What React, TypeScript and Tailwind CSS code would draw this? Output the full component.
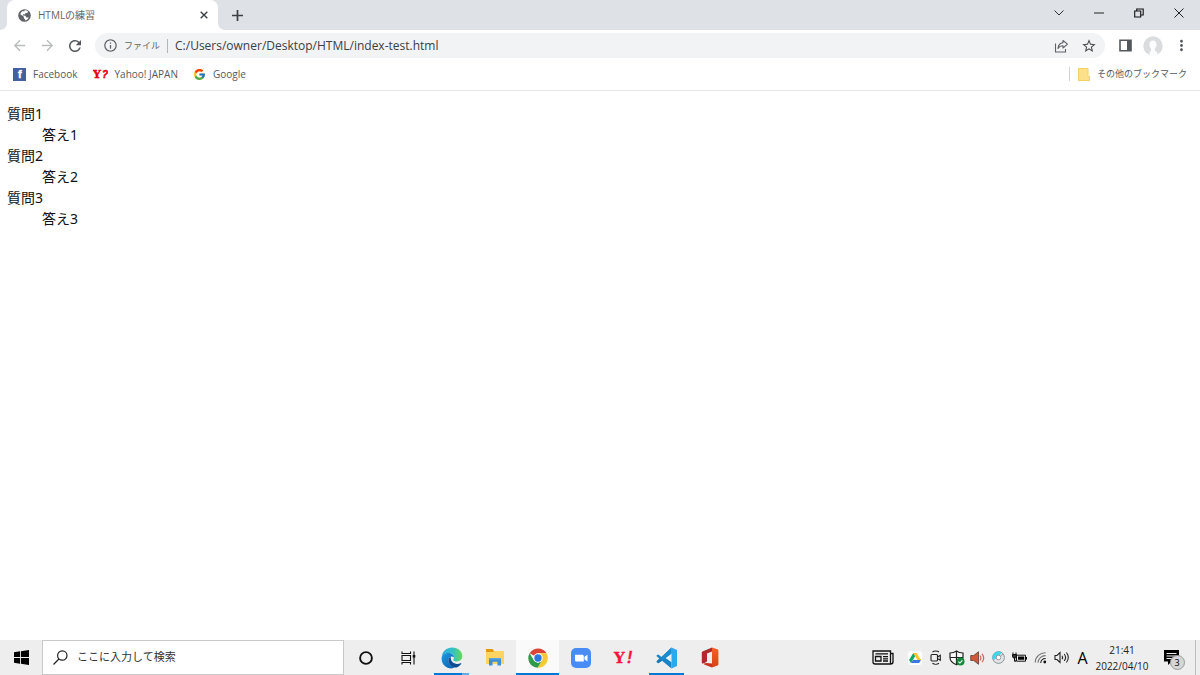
import React from 'react';
import { FcGoogle } from 'react-icons/fc';
import { MdArrowBack, MdArrowForward, MdRefresh, MdInfoOutline, MdStarBorder, MdMoreVert } from 'react-icons/md';

const uiFont = "font-['Open_Sans','Noto_Sans_CJK_JP',sans-serif]";

const questions = [
  { q: '質問1', a: '答え1' },
  { q: '質問2', a: '答え2' },
  { q: '質問3', a: '答え3' },
];

/* ---------- Browser icons ---------- */

const GlobeIcon = () => (
  <svg width="13" height="13" viewBox="0 0 13 13">
    <circle cx="6.5" cy="6.5" r="6.300" fill="#5f6368" />
    <path d="M6.600 1.200c1.500 0 2.600.5 3.500 1.400L9.300 4 7.500 4.200 6.600 5.400 5 5.300 4.800 6.600l2.600.2 1 1.600 2.300.1c-.5 1.400-1.700 2.600-3.200 3L7 10.200 5.800 9.300l.1-1.500-3.600-2.600c.5-1.600 1.400-2.600 2.500-3.200l1.400.6z" fill="#fff" />
  </svg>
);

const ShareIcon = () => (
  <svg width="15" height="14" viewBox="0 0 15 14" fill="none" stroke="#5f6368" strokeWidth="1.1">
    <path d="M1.500 4.500V13h10v-3" />
    <path d="M9 1.500l4.500 3.700L9 9V6.800C6.500 6.800 5 7.800 4 9.500c.3-3.300 2-5.500 5-5.900z" strokeLinejoin="round" />
  </svg>
);

const AvatarIcon = () => (
  <svg width="20" height="20" viewBox="0 0 20 20">
    <circle cx="10" cy="10" r="9.700" fill="#dadcde" />
    <path d="M10 4.500c2.300 0 3.600 1.700 3.600 4 0 1.700-.7 3.200-1.600 4.200v2l2.300 1.600V20H6.500v-3.700L8 14.700v-2c-1-1-1.600-2.500-1.600-4.200 0-2.300 1.300-4 3.600-4z" fill="#fbfcfd" />
  </svg>
);

const FacebookIcon = () => (
  <svg width="13" height="13" viewBox="0 0 13 13">
    <rect width="13" height="13" fill="#4460a0" />
    <text x="5" y="10" fontFamily="Liberation Sans" fontWeight="700" fontSize="11" fill="#fff" stroke="#fff" strokeWidth=".4">f</text>
  </svg>
);

const YahooJapanIcon = () => (
  <svg width="15" height="15" viewBox="0 0 15 15" fill="#e60012" stroke="#e60012" strokeWidth=".5">
    <text x="0" y="11" fontFamily="DejaVu Serif" fontWeight="700" fontSize="11">Y</text>
    <text x="9" y="11" fontFamily="Liberation Sans" fontWeight="700" fontStyle="italic" fontSize="10">?</text>
  </svg>
);

/* ---------- Taskbar icons ---------- */

const WindowsIcon = () => (
  <svg width="15" height="15" viewBox="0 0 15 15" fill="#000">
    <path d="M0 2.200l6-.9v5.800H0zM6.900 1.200L15 0v7.100H6.900zM0 7.900h6v5.800l-6-.9zM6.900 7.900H15V15l-8.100-1.200z" />
  </svg>
);

const SearchIcon = () => (
  <svg width="15" height="15" viewBox="0 0 15 15" fill="none" stroke="#222" strokeWidth="1.200">
    <circle cx="9.300" cy="5.500" r="4.700" />
    <path d="M5.900 9L.5 14.500" />
  </svg>
);

const CortanaIcon = () => (
  <svg width="14" height="14" viewBox="0 0 14 14">
    <circle cx="7" cy="7" r="5.900" fill="none" stroke="#111" strokeWidth="1.900" />
  </svg>
);

const TaskViewIcon = () => (
  <svg width="15" height="14" viewBox="0 0 15 14" fill="none" stroke="#111" strokeWidth="1.100">
    <path d="M1 .5v2h8.500v-2M1 13.500v-2h8.500v2M1 4.500h8.500v5H1zM13 .5v13" />
    <path d="M11.700 4h2.600v2.600h-2.600z" fill="#111" stroke="none" />
  </svg>
);

const EdgeIcon = () => (
  <svg width="22" height="22" viewBox="0 0 22 22">
    <defs>
      <linearGradient id="edgeTop" x1="0" y1="0" x2="1" y2="0">
        <stop offset="0" stopColor="#2aa9dc" />
        <stop offset=".55" stopColor="#34c3c4" />
        <stop offset="1" stopColor="#66d84f" />
      </linearGradient>
      <linearGradient id="edgeSide" x1="0" y1="0" x2="1" y2="1">
        <stop offset="0" stopColor="#1b9be4" />
        <stop offset="1" stopColor="#0a5cb0" />
      </linearGradient>
    </defs>
    <path d="M.7 10C1.200 4.300 5.800.5 11.200.5c5.900 0 10.100 4.100 10.100 8.600 0 3.400-2.500 5.400-5.400 5.400-2.400 0-3.800-.9-3.800-1.600 0-.5.900-.9.900-2.500 0-2.300-2-4.300-5.300-4.300C4.300 6.100 1.600 7.900.7 10z" fill="url(#edgeTop)" />
    <path d="M.6 11.400c.1-3.200 3-5.400 6.700-5.400 3.400 0 5.700 2.100 5.700 4.500-1-.9-2.300-1.100-3.200-.7-2 .8-2.800 3-2.200 5.300.7 2.700 3 4.800 6 5.500-1 .5-2.100.8-3 .8C4.900 21.400.5 17 .6 11.400z" fill="url(#edgeSide)" />
    <path d="M9.800 9.800c-2.200.9-2.900 3.400-2.100 5.800 1.200 3.600 4.500 5.300 7.600 4.900 2-.6 3.900-2.100 4.900-3.800.3-.5-.1-.8-.6-.5-1.200.6-2.500.8-3.900.7-3.800-.3-6.300-3.100-5.900-7.100z" fill="#0d4b96" />
  </svg>
);

const ExplorerIcon = () => (
  <svg width="20" height="17" viewBox="0 0 20 17">
    <path d="M1 0h6.500L9 2v3H1z" fill="#e19a0c" />
    <path d="M1 3h7l1.500-1H19v13H1z" fill="#fcd462" />
    <path d="M4 9h12v7.500h-3.500v-3.700h-5v3.700H4z" fill="#3c8fd6" />
    <path d="M4 9h12v1.500H4z" fill="#56a6e4" />
  </svg>
);

const ChromeIcon = () => (
  <svg width="20" height="20" viewBox="0 0 48 48">
    <path d="M24 24L4 12.500A23.500 23.500 0 0 1 44.500 12.700H24z" fill="#db4437" />
    <path d="M24 12.700h20.500A23.500 23.500 0 0 1 23 47.500l10.800-18z" fill="#fcc934" />
    <path d="M3.800 12.300L14.200 29.700 24 35.300l9.800-5.800L23 47.500A23.500 23.500 0 0 1 3.800 12.300z" fill="#2e9c4b" />
    <circle cx="24" cy="24" r="11.300" fill="#fff" />
    <circle cx="24" cy="24" r="8.800" fill="#2a76e2" />
  </svg>
);

const ZoomIcon = () => (
  <svg width="20" height="20" viewBox="0 0 20 20">
    <rect width="20" height="20" rx="5" fill="#4a8cf6" />
    <path d="M4 6.700h7.200c1 0 1.600.7 1.600 1.600v5.200H5.600C4.600 13.500 4 12.800 4 11.900zM13.500 8.800l3-2v6.600l-3-2z" fill="#fff" />
  </svg>
);

const YahooIcon = () => (
  <svg width="22" height="22" viewBox="0 0 22 22" fill="#f5153f" stroke="#f5153f" strokeWidth=".3">
    <text x="1" y="16" fontFamily="DejaVu Serif" fontWeight="700" fontSize="15">Y</text>
    <text x="14" y="16" fontFamily="Liberation Sans" fontWeight="700" fontStyle="italic" fontSize="16">!</text>
  </svg>
);

const VSCodeIcon = () => (
  <svg width="22" height="22" viewBox="0 0 22 22">
    <path d="M15.500.5L5.500 10 2.300 7.500.6 8.300v1L15.500 21.500v-6.200L9.500 11l6-4.400z" fill="#1784c8" />
    <path d="M15.500 6.600L9.500 11 2.300 16.300.6 15.300v-1.100L5.500 10l10-9.500z" fill="#1b8bd0" />
    <path d="M.6 14.200L4 11l2 2.700-3.700 2.600z" fill="#1b78bb" />
    <path d="M15.500.5L21 3v16l-5.500 2.500z" fill="#2ba9ee" />
  </svg>
);

const OfficeIcon = () => (
  <svg width="18" height="21" viewBox="0 0 18 21">
    <defs>
      <linearGradient id="officeSide" x1="0" y1="0" x2="0" y2="1">
        <stop offset="0" stopColor="#f0642c" />
        <stop offset=".5" stopColor="#e8501c" />
        <stop offset="1" stopColor="#d8401a" />
      </linearGradient>
    </defs>
    <path d="M.8 5.800C.8 5 1.200 4.600 2 4.200L11 .5v4L6 6.400v7.200c0 1-.5 1.500-1.400 1.900L2 16.600c-.8.200-1.200-.2-1.200-1z" fill="#b3282a" />
    <path d="M11 .5l5.500 1.800c.6.200.9.600.9 1.200v13.800c0 .7-.3 1-.9 1.200L11 20.500z" fill="url(#officeSide)" />
    <path d="M3 16.500l2.500-.5 5.500.5v4L3.800 17.800c-.8-.3-1-.8-.8-1.300z" fill="#c93220" />
  </svg>
);

const NewsIcon = () => (
  <svg width="22" height="15" viewBox="0 0 22 15" fill="none" stroke="#111" strokeWidth="1.300">
    <path d="M1 1h17.500v13H3.200C1.800 14 1 13.200 1 12zM18.500 3.500H21V12c0 1.300-.9 2-2.500 2" />
    <path d="M3.500 6.500H9V11H3.500zM3.500 3.800h12.500M11 6.600h5M11 8.800h5M11 11h5" />
  </svg>
);

const DriveIcon = () => (
  <svg width="14" height="14" viewBox="0 0 14 14">
    <rect width="14" height="14" rx="3" fill="#fff" />
    <path d="M5.300 2L1 9l2 3L7.300 5z" fill="#11a860" />
    <path d="M5.300 2h3.400L13 9H9.300z" fill="#fcc52f" />
    <path d="M5 9h8l-2 3H3z" fill="#3678e6" />
  </svg>
);

const MeetIcon = () => (
  <svg width="12" height="15" viewBox="0 0 12 15" fill="none" stroke="#222" strokeWidth="1.100">
    <rect x="1" y="4.500" width="6.500" height="6.500" rx="1" />
    <path d="M7.500 7l2.800-1.700v5L7.500 8.600M2.500 2C4.200.7 7.300.7 9 2M2.500 13.300c1.700 1.200 4.800 1.200 6.500 0" />
  </svg>
);

const ShieldIcon = () => (
  <svg width="16" height="16" viewBox="0 0 16 16">
    <path d="M7.500 1C5.700 2.400 3.500 3 1 3v4.500c0 3.500 2.800 5.800 6.500 7.300C11.200 13.300 14 11 14 7.500V3c-2.500 0-4.700-.6-6.500-2zM7.500 1v13.500M1 7.500h13" fill="#f8f8f8" stroke="#222" strokeWidth="1.200" />
    <circle cx="11.500" cy="11.500" r="4" fill="#16883e" />
    <path d="M9.500 11.600l1.400 1.400 2.500-2.700" fill="none" stroke="#fff" strokeWidth="1.100" />
  </svg>
);

const SpeakerIcon = () => (
  <svg width="15" height="14" viewBox="0 0 15 14">
    <path d="M.7 4.500h3L8.500.7v12.600L3.700 9.500h-3z" fill="#d2583a" stroke="#5e3b34" strokeWidth=".8" />
    <path d="M10 4.500c1 1.500 1 3.500 0 5M12 2.800c2 2.500 2 5.900 0 8.400" fill="none" stroke="#c8685a" strokeWidth="1.200" />
  </svg>
);

const RingIcon = () => (
  <svg width="13" height="13" viewBox="0 0 13 13">
    <circle cx="6.500" cy="6.500" r="5.900" fill="#e2e5e7" stroke="#8c9498" strokeWidth="1" />
    <path d="M6.500 6.500L1.200 9A5.800 5.800 0 0 1 9.500 1.500z" fill="#3cd9ec" />
    <circle cx="6.500" cy="6.500" r="2.300" fill="#fff" stroke="#8c9498" strokeWidth=".9" />
    <path d="M8.500 5l2.500-2" stroke="#8c9498" strokeWidth=".9" />
  </svg>
);

const BatteryIcon = () => (
  <svg width="15" height="11" viewBox="0 0 15 11">
    <path d="M4.500 3.200h9v6h-9z" fill="#eee" stroke="#111" />
    <path d="M6 4.600h6.200v3.200H6zM14 5h1v2.500h-1z" fill="#000" />
    <path d="M1 .5v2M4 .5v2M.5 2.500h4v2c0 1-.8 1.500-2 1.500s-2-.5-2-1.500zM2.500 6v3.200H4" fill="#333" stroke="#111" />
  </svg>
);

const WifiIcon = () => (
  <svg width="13" height="13" viewBox="0 0 13 13" fill="none" strokeWidth="1.100">
    <path d="M1.200 11.500A10 10 0 0 1 11.700 1.800M4 11.800a7.300 7.300 0 0 1 7.700-7.200" stroke="#777" />
    <path d="M6.700 12a4.700 4.700 0 0 1 5-4.500" stroke="#222" />
    <circle cx="10.800" cy="11" r="1.400" fill="#111" />
  </svg>
);

const VolumeIcon = () => (
  <svg width="16" height="13" viewBox="0 0 16 13" fill="none" stroke="#222" strokeWidth="1.100">
    <path d="M1 4.500h2L6 1.500v10l-3-3H1zM8 4.800c.7 1 .7 2.400 0 3.400M10.200 3c1.600 2 1.600 5 0 7M12.400 1.500c2.500 2.900 2.500 7.100 0 10" />
  </svg>
);

const NotificationIcon = () => (
  <svg width="15" height="15" viewBox="0 0 15 15">
    <path d="M0 0h15v11.500H7.500L4 15v-3.500H0z" fill="#000" />
    <path d="M2.500 3.500h10M2.500 6h10M2.500 8.500h6" stroke="#eee" />
  </svg>
);

/* ---------- Data ---------- */

const bookmarks = [
  { label: 'Facebook', icon: <FacebookIcon /> },
  { label: 'Yahoo! JAPAN', icon: <YahooJapanIcon /> },
  { label: 'Google', icon: <FcGoogle size={13} /> },
];

const apps = [
  { name: 'Cortana', icon: <CortanaIcon />, state: 'idle' },
  { name: 'タスク ビュー', icon: <TaskViewIcon />, state: 'idle' },
  { name: 'Edge', icon: <EdgeIcon />, state: 'stacked' },
  { name: 'エクスプローラー', icon: <ExplorerIcon />, state: 'idle' },
  { name: 'Chrome', icon: <ChromeIcon />, state: 'active' },
  { name: 'Zoom', icon: <ZoomIcon />, state: 'idle' },
  { name: 'Yahoo!', icon: <YahooIcon />, state: 'idle' },
  { name: 'Visual Studio Code', icon: <VSCodeIcon />, state: 'open' },
  { name: 'Office', icon: <OfficeIcon />, state: 'idle' },
];

const tray = [
  { name: 'Google ドライブ', icon: <DriveIcon /> },
  { name: '会議', icon: <MeetIcon /> },
  { name: 'セキュリティ', icon: <ShieldIcon /> },
  { name: 'オーディオ', icon: <SpeakerIcon /> },
  { name: 'ディスク', icon: <RingIcon /> },
  { name: 'バッテリー', icon: <BatteryIcon /> },
  { name: 'ネットワーク', icon: <WifiIcon /> },
  { name: '音量', icon: <VolumeIcon /> },
];

/* ---------- Sections ---------- */

const TabStrip = () => (
  <div className="flex h-[30px] bg-[#dee1e6]">
    <div className="flex w-[7px] items-end">
      <svg width="7" height="7" viewBox="0 0 7 7"><path d="M7 0v7H0c4 0 7-3 7-7z" fill="#fff" /></svg>
    </div>
    <div className="flex w-[211px] items-center rounded-t-lg bg-white pr-2 pl-[11px]">
      <GlobeIcon />
      <span className="ml-[7px] flex-1 text-[10px] text-[#5f6368]">HTMLの練習</span>
      <button aria-label="タブを閉じる" className="flex size-3 items-center justify-center">
        <svg width="8" height="8" viewBox="0 0 8 8" stroke="#3c4043" strokeWidth="1.400"><path d="M.7.7l6.600 6.600M7.300.7L.7 7.300" /></svg>
      </button>
    </div>
    <div className="flex w-[7px] items-end">
      <svg width="7" height="7" viewBox="0 0 7 7"><path d="M0 0v7h7C3 7 0 4 0 0z" fill="#fff" /></svg>
    </div>
    <button aria-label="新しいタブ" className="flex w-6 items-center justify-center">
      <svg width="11" height="11" viewBox="0 0 11 11" stroke="#3c4043" strokeWidth="1.700"><path d="M5.500 0v11M0 5.500h11" /></svg>
    </button>
    <div className="ml-auto flex h-[25px] pr-px">
      <button aria-label="タブを検索" className="flex w-10 items-center justify-center">
        <svg width="10" height="6" viewBox="0 0 10 6" fill="none" stroke="#333"><path d="M.5.5L5 5 9.500.5" /></svg>
      </button>
      <button aria-label="最小化" className="flex w-10 items-center justify-center">
        <svg width="10" height="2" viewBox="0 0 10 2"><path d="M0 .5h10v1H0z" fill="#222" /></svg>
      </button>
      <button aria-label="元に戻す" className="flex w-10 items-center justify-center">
        <svg width="10" height="10" viewBox="0 0 10 10" fill="none" stroke="#111" strokeWidth="1.100"><path d="M.7 3h6v6h-6zM2.700 3V1h6.500v6H7" /></svg>
      </button>
      <button aria-label="閉じる" className="flex w-10 items-center justify-center">
        <svg width="10" height="10" viewBox="0 0 10 10" stroke="#222"><path d="M.5.5l9 9M9.500.5l-9 9" /></svg>
      </button>
    </div>
  </div>
);

const Toolbar = () => (
  <div className="flex h-[31px] items-center bg-white px-[5px]">
    <button aria-label="戻る" className="flex w-7 justify-center"><MdArrowBack size={17} color="#babcbe" /></button>
    <button aria-label="進む" className="flex w-7 justify-center"><MdArrowForward size={17} color="#babcbe" /></button>
    <button aria-label="再読み込み" className="flex w-7 justify-center"><MdRefresh size={18} color="#54585c" /></button>
    <div className="ml-[6px] flex h-[25px] flex-1 items-center rounded-full bg-[#f1f3f4] pr-[2px] pl-2">
      <MdInfoOutline size={15} color="#5f6368" />
      <label htmlFor="address" className="ml-[6px] text-[9px] whitespace-nowrap text-[#5f6368]">ファイル</label>
      <span className="mx-[7px] h-[14px] w-px bg-[#b4b7ba]" />
      <input
        id="address"
        type="text"
        defaultValue="C:/Users/owner/Desktop/HTML/index-test.html"
        className="min-w-0 flex-1 bg-transparent text-[12px] text-[#3c4043] outline-none"
      />
      <button aria-label="共有" className="flex w-7 justify-center"><ShareIcon /></button>
      <button aria-label="ブックマークに追加" className="flex w-7 justify-center"><MdStarBorder size={16} color="#4a4e52" /></button>
    </div>
    <button aria-label="サイドパネル" className="ml-[6px] flex w-7 justify-center">
      <svg width="13" height="13" viewBox="0 0 13 13"><path d="M1 1.200h11v10.600H1z" fill="none" stroke="#54585c" strokeWidth="1.600" /><path d="M8 1h4v11H8z" fill="#54585c" /></svg>
    </button>
    <button aria-label="プロフィール" className="flex w-7 justify-center"><AvatarIcon /></button>
    <button aria-label="メニュー" className="flex w-7 justify-center"><MdMoreVert size={17} color="#54585c" /></button>
  </div>
);

const BookmarksBar = () => (
  <nav className="flex h-[30px] items-center border-b border-[#e4e6e8] bg-white px-[13px] pb-[3px] text-[10px] text-[#55595d]">
    <div className="flex gap-[15px]">
      {bookmarks.map((b) => (
        <a key={b.label} href="#" className="flex items-center gap-[7px] whitespace-nowrap">
          {b.icon}
          {b.label}
        </a>
      ))}
    </div>
    <a href="#" className="ml-auto flex items-center text-[9px] whitespace-nowrap">
      <span className="mr-2 h-[14px] w-px bg-[#d0d3d6]" />
      <svg width="12" height="13" viewBox="0 0 12 13"><path d="M.5.5H10v8h1.500v4H.5z" fill="#fde08a" stroke="#f3cf68" /></svg>
      <span className="ml-[7px]">その他のブックマーク</span>
    </a>
  </nav>
);

const Taskbar = () => (
  <footer className="flex h-[35px] bg-[#eeeeee] text-black">
    <button aria-label="スタート" className="flex w-[42px] items-center justify-center"><WindowsIcon /></button>
    <label className="flex w-[302px] items-center border border-[#c9c9c9] bg-white pl-[10px]">
      <SearchIcon />
      <input
        type="text"
        aria-label="検索"
        placeholder="ここに入力して検索"
        className="ml-[9px] min-w-0 flex-1 bg-transparent text-[11px] outline-none placeholder:text-[#333]"
      />
    </label>
    {apps.map((app) => (
      <button
        key={app.name}
        aria-label={app.name}
        className={`flex w-[43px] flex-col items-center ${app.state === 'active' ? 'bg-[#fafafa]' : ''}`}
      >
        <span className="flex flex-1 items-center pt-[2px]">{app.icon}</span>
        {app.state === 'active' && <span className="h-[2px] w-full bg-[#0078d7]" />}
        {app.state === 'open' && <span className="h-[2px] w-[35px] bg-[#0078d7]" />}
        {app.state === 'stacked' && <span className="h-[2px] w-[35px] border-r-[7px] border-[#6cabe2] bg-[#0078d7]" />}
        {app.state === 'idle' && <span className="h-[2px]" />}
      </button>
    ))}
    <div className="ml-auto flex">
      <button aria-label="ニュース" className="flex w-[42px] items-center justify-center"><NewsIcon /></button>
      {tray.map((t) => (
        <button key={t.name} aria-label={t.name} className="flex w-[21px] items-center justify-center">{t.icon}</button>
      ))}
      <button className="w-[21px] text-center text-[16px]">A</button>
      <button className="w-[58px] text-center text-[10px] leading-4 whitespace-nowrap text-[#222]">
        21:41
        <br />
        2022/04/10
      </button>
      <button aria-label="通知" className="flex w-10 items-center justify-center">
        <span className="relative">
          <NotificationIcon />
          <span className="absolute top-[5px] left-[6px] flex size-[15px] items-center justify-center rounded-full border border-[#999] bg-[#d6d6d6] text-[9px]">3</span>
        </span>
      </button>
      <span className="w-1" />
      <button aria-label="デスクトップの表示" className="w-[5px] border-l border-[#bdbdbd]" />
    </div>
  </footer>
);

export default function App() {
  return (
    <div className={`flex h-screen flex-col bg-white ${uiFont}`}>
      <TabStrip />
      <Toolbar />
      <BookmarksBar />
      <main className="flex-1 overflow-auto px-[7px] py-3 font-['Noto_Sans','Noto_Sans_CJK_JP',sans-serif] text-[14px] leading-[21px] text-[#111]">
        <dl>
          {questions.map((item) => (
            <React.Fragment key={item.q}>
              <dt>{item.q}</dt>
              <dd className="ml-[35px]">{item.a}</dd>
            </React.Fragment>
          ))}
        </dl>
      </main>
      <Taskbar />
    </div>
  );
}
